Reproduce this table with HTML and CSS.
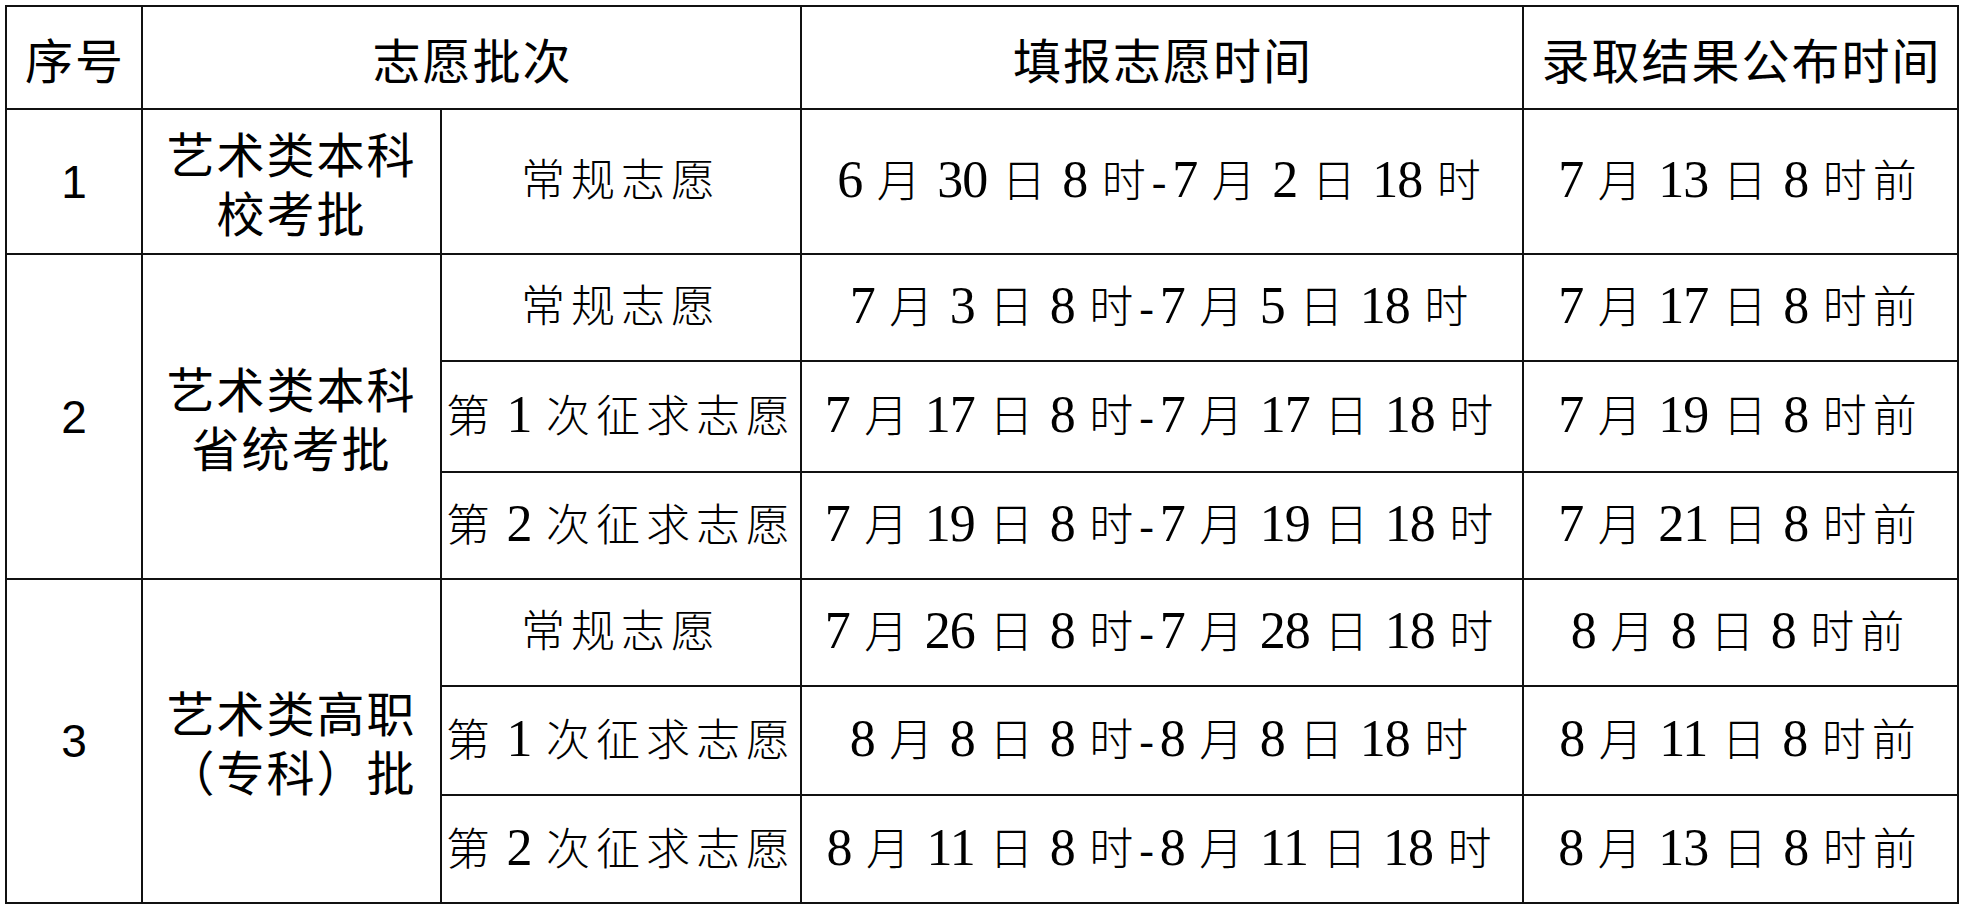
FILE: index.html
```html
<!DOCTYPE html>
<html lang="zh-CN">
<head>
<meta charset="utf-8">
<title>艺术类志愿填报时间安排</title>
<link rel="stylesheet" href="styles.css">
</head>
<body>
<div class="page">
<table class="schedule">
  <colgroup>
    <col class="c-no">
    <col class="c-batch">
    <col class="c-type">
    <col class="c-fill">
    <col class="c-pub">
  </colgroup>
  <thead>
    <tr class="r-head">
      <th>序号</th>
      <th colspan="2">志愿批次</th>
      <th>填报志愿时间</th>
      <th>录取结果公布时间</th>
    </tr>
  </thead>
  <tbody>
    <tr class="r-1">
      <td class="no">1</td>
      <td class="batch"><span class="ln">艺术类本科</span><span class="ln">校考批</span></td>
      <td class="txt">常规志愿</td>
      <td class="txt"><span class="n">6</span> 月 <span class="n">30</span> 日 <span class="n">8</span> 时-<span class="n">7</span> 月 <span class="n">2</span> 日 <span class="n">18</span> 时</td>
      <td class="txt"><span class="n">7</span> 月 <span class="n">13</span> 日 <span class="n">8</span> 时前</td>
    </tr>
    <tr class="r-2">
      <td class="no" rowspan="3">2</td>
      <td class="batch" rowspan="3"><span class="ln">艺术类本科</span><span class="ln">省统考批</span></td>
      <td class="txt">常规志愿</td>
      <td class="txt"><span class="n">7</span> 月 <span class="n">3</span> 日 <span class="n">8</span> 时-<span class="n">7</span> 月 <span class="n">5</span> 日 <span class="n">18</span> 时</td>
      <td class="txt"><span class="n">7</span> 月 <span class="n">17</span> 日 <span class="n">8</span> 时前</td>
    </tr>
    <tr class="r-3">
      <td class="txt">第 <span class="n">1</span> 次征求志愿</td>
      <td class="txt"><span class="n">7</span> 月 <span class="n">17</span> 日 <span class="n">8</span> 时-<span class="n">7</span> 月 <span class="n">17</span> 日 <span class="n">18</span> 时</td>
      <td class="txt"><span class="n">7</span> 月 <span class="n">19</span> 日 <span class="n">8</span> 时前</td>
    </tr>
    <tr class="r-4">
      <td class="txt">第 <span class="n">2</span> 次征求志愿</td>
      <td class="txt"><span class="n">7</span> 月 <span class="n">19</span> 日 <span class="n">8</span> 时-<span class="n">7</span> 月 <span class="n">19</span> 日 <span class="n">18</span> 时</td>
      <td class="txt"><span class="n">7</span> 月 <span class="n">21</span> 日 <span class="n">8</span> 时前</td>
    </tr>
    <tr class="r-5">
      <td class="no" rowspan="3">3</td>
      <td class="batch" rowspan="3"><span class="ln">艺术类高职</span><span class="ln">（专科）批</span></td>
      <td class="txt">常规志愿</td>
      <td class="txt"><span class="n">7</span> 月 <span class="n">26</span> 日 <span class="n">8</span> 时-<span class="n">7</span> 月 <span class="n">28</span> 日 <span class="n">18</span> 时</td>
      <td class="txt"><span class="n">8</span> 月 <span class="n">8</span> 日 <span class="n">8</span> 时前</td>
    </tr>
    <tr class="r-6">
      <td class="txt">第 <span class="n">1</span> 次征求志愿</td>
      <td class="txt"><span class="n">8</span> 月 <span class="n">8</span> 日 <span class="n">8</span> 时-<span class="n">8</span> 月 <span class="n">8</span> 日 <span class="n">18</span> 时</td>
      <td class="txt"><span class="n">8</span> 月 <span class="n">11</span> 日 <span class="n">8</span> 时前</td>
    </tr>
    <tr class="r-7">
      <td class="txt">第 <span class="n">2</span> 次征求志愿</td>
      <td class="txt"><span class="n">8</span> 月 <span class="n">11</span> 日 <span class="n">8</span> 时-<span class="n">8</span> 月 <span class="n">11</span> 日 <span class="n">18</span> 时</td>
      <td class="txt"><span class="n">8</span> 月 <span class="n">13</span> 日 <span class="n">8</span> 时前</td>
    </tr>
  </tbody>
</table>
</div>
</body>
</html>
```

FILE: styles.css
```css
html, body {
  margin: 0;
  padding: 0;
  background: #ffffff;
}

.page {
  padding: 5px 0 0 5px;
}

.schedule {
  border-collapse: collapse;
  table-layout: fixed;
  width: 1954px;
  color: #000000;
}

.schedule th,
.schedule td {
  border: 2px solid #111111;
  padding: 0;
  text-align: center;
  vertical-align: middle;
  white-space: nowrap;
}

.c-no { width: 136px; }
.c-batch { width: 299px; }
.c-type { width: 360px; }
.c-fill { width: 722px; }
.c-pub { width: 435px; }

.r-head { height: 103px; }
.r-1 { height: 145px; }
.r-2 { height: 107px; }
.r-3 { height: 111px; }
.r-4 { height: 107px; }
.r-5 { height: 107px; }
.r-6 { height: 109px; }
.r-7 { height: 108px; }

.schedule th {
  font-family: "Noto Sans CJK SC", sans-serif;
  font-weight: 400;
  font-size: 48px;
  letter-spacing: 2px;
  padding-left: 2px;
  line-height: 58px;
}

.no {
  font-family: "Liberation Sans", Arial, sans-serif;
  font-size: 46px;
  line-height: 1;
}

.batch {
  font-family: "Noto Sans CJK SC", sans-serif;
  font-weight: 400;
  font-size: 48px;
  letter-spacing: 2px;
  padding-left: 2px;
  line-height: 59px;
}

.ln {
  display: block;
  height: 59px;
  overflow: visible;
}

.txt {
  font-family: "Liberation Serif", "Noto Sans CJK SC", serif;
  font-weight: 300;
  font-size: 44px;
  letter-spacing: 6px;
  word-spacing: -6.5px;
  padding-left: 6px;
  line-height: 58px;
}

.n {
  font-family: "Liberation Serif", serif;
  font-weight: 400;
  font-size: 52px;
  letter-spacing: -1px;
  margin-right: 4px;
}
```
